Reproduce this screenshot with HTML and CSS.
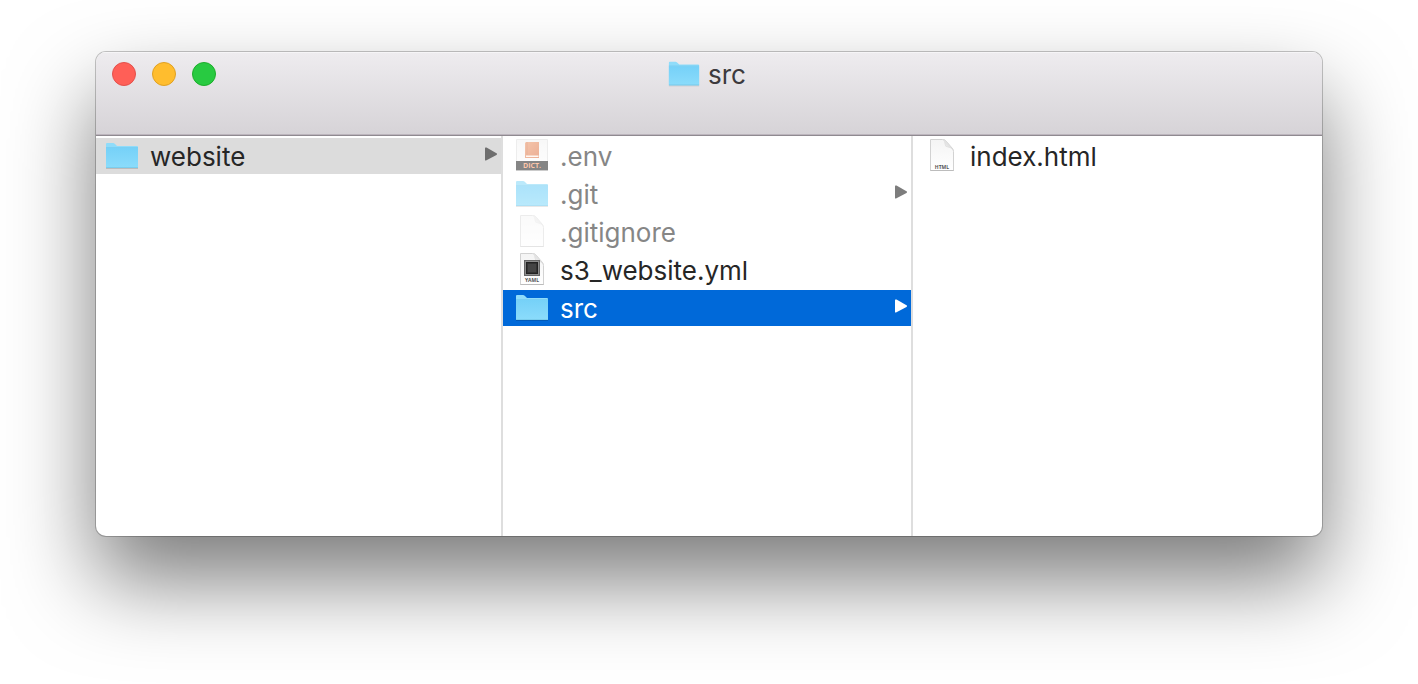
FILE: index.html
```html
<!DOCTYPE html>
<html lang="en">

<head>
    <meta charset="UTF-8">
    <meta name="viewport" content="width=device-width, initial-scale=1.0">
    <title>src</title>
    <link rel="stylesheet" href="styles.css">
</head>

<body>
    <!-- shared icons -->
    <svg class="defs" width="0" height="0" aria-hidden="true">
        <defs>
            <linearGradient id="folderFill" x1="0" y1="0" x2="0" y2="1">
                <stop offset="0" stop-color="#76d1f8" />
                <stop offset="1" stop-color="#8bdcfb" />
            </linearGradient>
            <linearGradient id="pageFill" x1="0" y1="0" x2="0" y2="1">
                <stop offset="0" stop-color="#f4f4f4" />
                <stop offset="1" stop-color="#ffffff" />
            </linearGradient>
            <linearGradient id="foldFill" x1="0" y1="1" x2="1" y2="0">
                <stop offset="0" stop-color="#ffffff" />
                <stop offset="0.5" stop-color="#e2e2e2" />
                <stop offset="1" stop-color="#ffffff" />
            </linearGradient>
            <linearGradient id="bookFill" x1="0" y1="0" x2="1" y2="1">
                <stop offset="0" stop-color="#ee9f74" />
                <stop offset="1" stop-color="#e07a50" />
            </linearGradient>
        </defs>
        <symbol id="folder" viewBox="0 0 32 36">
            <path d="M0 30.5h32" stroke="#000" stroke-opacity=".15" />
            <path d="M0 30V6q0-1 1-1h6q1 0 2 1l2 2h20q1 0 1 1v21z" fill="#8fdcfa" />
            <path d="M0 10h32v19q0 1-1 1H1q-1 0-1-1z" fill="url(#folderFill)" />
            <path d="M0 9.5h32" stroke="#6cc6ee" stroke-opacity=".6" />
            <path d="M0 29.5h32" stroke="#6fc3e4" stroke-opacity=".6" />
        </symbol>
        <symbol id="page" viewBox="0 0 32 36">
            <path d="M4.5 1.5h12q2 0 3.500 1.500l6 7q1.500 1.500 1.500 3.500v19h-23z" fill="url(#pageFill)" stroke="#d2d2d2" />
            <path d="M17 1.500q2 1 2 4.500 0 3 3 3 4 .5 5 3l-7-9q-1-1.500-3-1.500z" fill="url(#foldFill)" stroke="#dadada" stroke-width=".6" />
            <path d="M4 32.500h24" stroke="#000" stroke-opacity=".1" />
        </symbol>
        <symbol id="arrow" viewBox="0 0 12 36">
            <path d="M.5 9.500q-.5 0-.5.800v11.400q0 1.200 1 .8l10.500-5.600q1-.9 0-1.600L1.500 9.600z" fill="currentColor" />
        </symbol>
    </svg>

    <main class="window">
        <header class="titlebar">
            <div class="lights">
                <button class="light close" type="button" aria-label="Close"></button>
                <button class="light minimize" type="button" aria-label="Minimize"></button>
                <button class="light zoom" type="button" aria-label="Zoom"></button>
            </div>
            <h1 class="title">
                <svg class="title-icon" aria-hidden="true"><use href="#folder" /></svg>
                src
            </h1>
        </header>

        <div class="columns">
            <ul class="column first">
                <li>
                    <a class="item current" href="#website">
                        <svg class="icon" aria-hidden="true"><use href="#folder" /></svg>
                        <span class="name">website</span>
                        <svg class="arrow" aria-hidden="true"><use href="#arrow" /></svg>
                    </a>
                </li>
            </ul>

            <ul class="column">
                <li>
                    <a class="item hidden-file" href="#env">
                        <svg class="icon" viewBox="0 0 32 36" aria-hidden="true">
                            <path d="M.5 1.500v31h31v-31z" fill="url(#pageFill)" stroke="#e2e2e2" />
                            <path d="M10 4h13v16H9V5z" fill="url(#bookFill)" />
                            <path d="M10 17.500h12.500v1.500H10z" fill="#fff3ea" />
                            <path d="M11 4v13" stroke="#d0754c" stroke-opacity=".6" />
                            <path d="M0 23h32v9H0z" fill="#353535" />
                            <path d="M0 32.500h32" stroke="#aaa" />
                            <text class="dict-label" x="16" y="30">DICT.</text>
                        </svg>
                        <span class="name">.env</span>
                    </a>
                </li>
                <li>
                    <a class="item hidden-file" href="#git">
                        <svg class="icon" aria-hidden="true"><use href="#folder" /></svg>
                        <span class="name">.git</span>
                        <svg class="arrow" aria-hidden="true"><use href="#arrow" /></svg>
                    </a>
                </li>
                <li>
                    <a class="item hidden-file blank" href="#gitignore">
                        <svg class="icon" aria-hidden="true"><use href="#page" /></svg>
                        <span class="name">.gitignore</span>
                    </a>
                </li>
                <li>
                    <a class="item" href="#s3_website">
                        <svg class="icon" viewBox="0 0 32 36" aria-hidden="true">
                            <use href="#page" width="32" height="36" />
                            <path d="M8 8h16v16H8z" fill="#666" />
                            <path d="M9 9h14v14H9z" fill="#8c8c8c" />
                            <path d="M10 10h12v12H10z" fill="#222" />
                            <path d="M11.500 11.500h9v9h-9z" fill="#444" stroke="#333" />
                            <text class="page-label" x="16" y="30">YAML</text>
                        </svg>
                        <span class="name">s3_website.yml</span>
                    </a>
                </li>
                <li>
                    <a class="item selected" href="#src">
                        <svg class="icon" aria-hidden="true"><use href="#folder" /></svg>
                        <span class="name">src</span>
                        <svg class="arrow" aria-hidden="true"><use href="#arrow" /></svg>
                    </a>
                </li>
            </ul>

            <ul class="column">
                <li>
                    <a class="item" href="#index">
                        <svg class="icon" viewBox="0 0 32 36" aria-hidden="true">
                            <use href="#page" width="32" height="36" />
                            <text class="page-label" x="16" y="31">HTML</text>
                        </svg>
                        <span class="name">index.html</span>
                    </a>
                </li>
            </ul>
        </div>
    </main>
</body>

</html>
```

FILE: styles.css
```css
* {
    box-sizing: border-box;
}

body {
    margin: 0;
    min-height: 100vh;
    padding: 52px 96px;
    background: #fff;
    color: #262626;
    font-family: Inter, "Liberation Sans", sans-serif;
    font-size: 26px;
}

.defs {
    display: block;
}

.window {
    border-radius: 10px;
    background: #fff;
    box-shadow: 0 0 0 1px rgba(0, 0, 0, 0.22), 0 44px 86px rgba(0, 0, 0, 0.52);
    overflow: hidden;
}

.titlebar {
    display: grid;
    grid-template-columns: 1fr auto 1fr;
    align-items: start;
    height: 84px;
    padding: 4px 20px 0 16px;
    border-bottom: 1px solid #8f8a90;
    background: linear-gradient(#eeecef, #d6d3d7);
    box-shadow: inset 0 1px #f6f5f7, inset 0 -1px #bcb5bd;
}

.lights {
    display: flex;
    align-items: center;
    gap: 16px;
    height: 36px;
}

.light {
    width: 24px;
    height: 24px;
    padding: 0;
    border: 1px solid;
    border-radius: 50%;
}

.close {
    border-color: #e2514c;
    background: #ff5f57;
}

.minimize {
    border-color: #dfa023;
    background: #ffbd2e;
}

.zoom {
    border-color: #1dad2b;
    background: #28ca41;
}

.title {
    display: flex;
    align-items: center;
    gap: 8px;
    margin: 0;
    height: 36px;
    color: #3c3a3d;
    font-size: 26px;
    font-weight: 400;
}

.title-icon {
    width: 32px;
    height: 34px;
}

.columns {
    display: grid;
    grid-template-columns: 407fr 410fr 409fr;
    min-height: 400px;
}

.column {
    display: flex;
    flex-direction: column;
    gap: 2px;
    margin: 0;
    padding: 2px 0;
    list-style: none;
    border-right: 2px solid #dedede;
}

.column:last-child {
    border-right: 0;
}

.item {
    display: flex;
    align-items: center;
    gap: 12px;
    height: 36px;
    padding: 0 4px 0 13px;
    color: inherit;
    text-decoration: none;
}

.first .item {
    padding-left: 10px;
}

.icon {
    flex: none;
    width: 32px;
    height: 36px;
}

.name {
    flex: 1;
    padding-top: 2px;
    line-height: 34px;
}

.arrow {
    flex: none;
    width: 12px;
    height: 36px;
    color: #7d7d7d;
}

.current {
    background: #dcdcdc;
}

.current .arrow {
    color: #6e6e6e;
}

.selected,
.selected .arrow {
    color: #fff;
}

.selected {
    background: #0069d9;
}

.hidden-file .name {
    color: #868686;
}

.hidden-file .icon {
    opacity: 0.6;
}

.blank .icon {
    opacity: 0.4;
}

.dict-label,
.page-label {
    font-family: "Open Sans", "Liberation Sans", sans-serif;
    font-weight: 700;
    text-anchor: middle;
}

.dict-label {
    font-size: 7px;
    fill: #ffa070;
}

.page-label {
    font-size: 5px;
    fill: #555;
}
```
